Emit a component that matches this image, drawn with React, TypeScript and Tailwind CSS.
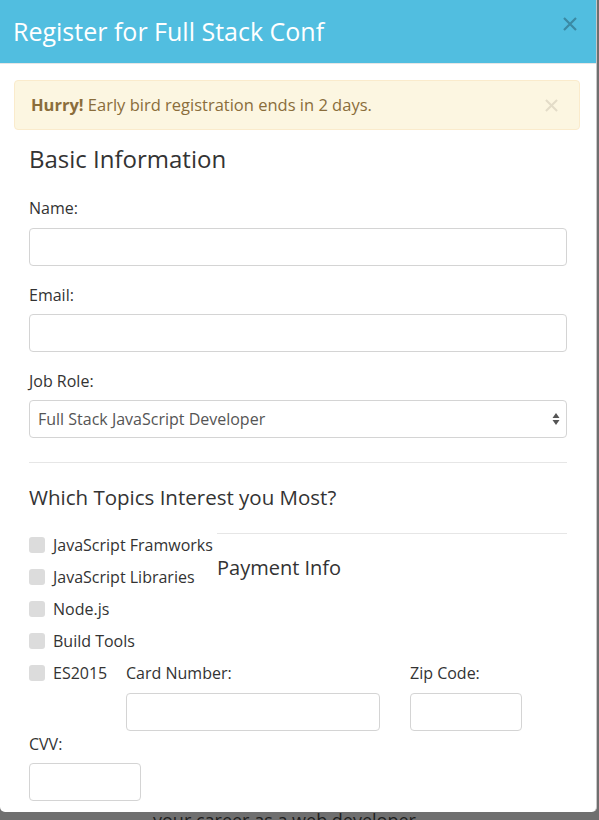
import { useState } from 'react'

const topics = ['JavaScript Framworks', 'JavaScript Libraries', 'Node.js', 'Build Tools']

function Checkbox({ label }: { label: string }) {
  return (
    <label className="flex h-[32px] items-center gap-[8px] text-[16px] text-[#333]">
      <span className="block h-[16px] w-[16px] shrink-0 rounded-[3px] bg-[#dcdcdc]" />
      {label}
    </label>
  )
}

function CloseIcon({ className }: { className: string }) {
  return (
    <svg viewBox="0 0 14 14" className={className} fill="none" stroke="currentColor" strokeWidth="2.2">
      <path d="M1 1L13 13M13 1L1 13" />
    </svg>
  )
}

function App() {
  const [role, setRole] = useState('Full Stack JavaScript Developer')

  const input =
    'block h-[38px] w-full rounded-[4px] border border-[#d4d4d4] bg-white px-[8px] text-[16px] outline-none'

  return (
    <div className="relative h-[820px] w-[599px] overflow-hidden bg-[#6f6f6f] font-['Open_Sans',sans-serif]">
      <div className="h-[812px] w-[597px] rounded-b-[5px] border-r border-[#c8c8c8] bg-white">
        <header className="flex h-[64px] items-center justify-between border-b border-[#e6e6e6] bg-[#51bee0] pl-[13px] pr-[19px]">
          <h1 className="text-[25px] font-medium text-white">Register for Full Stack Conf</h1>
          <CloseIcon className="mb-[16px] h-[14px] w-[14px] text-[#3b8aa4]" />
        </header>

        <div className="px-[14px] pr-[16px] pt-[16px]">
          <div className="flex h-[50px] items-center justify-between rounded-[4px] border border-[#faebcc] bg-[#fcf6e1] pl-[16px] pr-[21px] text-[16.5px] text-[#8a6d3b]">
            <p>
              <strong className="font-bold">Hurry!</strong> Early bird registration ends in 2 days.
            </p>
            <CloseIcon className="h-[13px] w-[13px] text-[#e3dcc8]" />
          </div>

          <form className="px-[15px] pr-[13px]">
            <h2 className="mt-[14px] text-[24px] leading-[30px] text-[#333]">Basic Information</h2>

            <label className="mt-[23px] block h-[22px] text-[16px] leading-[22px] text-[#333]">Name:</label>
            <input className={`mt-[9px] ${input}`} />

            <label className="mt-[18px] block h-[22px] text-[16px] leading-[22px] text-[#333]">Email:</label>
            <input className={`mt-[8px] ${input}`} />

            <label className="mt-[18px] block h-[22px] text-[16px] leading-[22px] text-[#333]">Job Role:</label>
            <div className="relative mt-[8px]">
              <select
                value={role}
                onChange={(e) => setRole(e.target.value)}
                className={`${input} appearance-none text-[#555]`}
              >
                <option>Full Stack JavaScript Developer</option>
                <option>Front End Developer</option>
                <option>Back End Developer</option>
              </select>
              <svg viewBox="0 0 8 14" className="pointer-events-none absolute right-[7px] top-[12px] h-[14px] w-[8px] text-[#555]">
                <path d="M4 1L7.5 6H0.5Z M4 13L0.5 8H7.5Z" fill="currentColor" />
              </svg>
            </div>

            <hr className="mt-[24px] border-[#e6e6e6]" />

            <h3 className="mt-[21px] text-[20.5px] leading-[26px] text-[#333]">Which Topics Interest you Most?</h3>

            <div className="mt-[19px] flex">
              <div className="w-[188px]">
                {topics.map((t) => (
                  <Checkbox key={t} label={t} />
                ))}
              </div>
              <div className="flex-1">
                <hr className="mt-[4px] border-[#e6e6e6]" />
                <h3 className="mt-[21px] text-[20px] leading-[26px] text-[#333]">Payment Info</h3>
              </div>
            </div>

            <div className="flex">
              <div className="w-[97px]">
                <Checkbox label="ES2015" />
              </div>
              <div className="w-[254px]">
                <label className="block h-[32px] text-[16px] leading-[32px] text-[#333]">Card Number:</label>
                <input className={`mt-[4px] ${input}`} />
              </div>
              <div className="ml-[30px] w-[112px]">
                <label className="block h-[32px] text-[16px] leading-[32px] text-[#333]">Zip Code:</label>
                <input className={`mt-[4px] ${input}`} />
              </div>
            </div>

            <label className="mt-[2px] block h-[22px] text-[16px] leading-[22px] text-[#333]">CVV:</label>
            <div className="mt-[8px] w-[112px]">
              <input className={input} />
            </div>
          </form>
        </div>
      </div>
      <p className="ml-[153px] -mt-[1px] text-[18px] leading-[18px] text-[#1e1e1e]">your career as a web developer</p>
    </div>
  )
}

export default App
